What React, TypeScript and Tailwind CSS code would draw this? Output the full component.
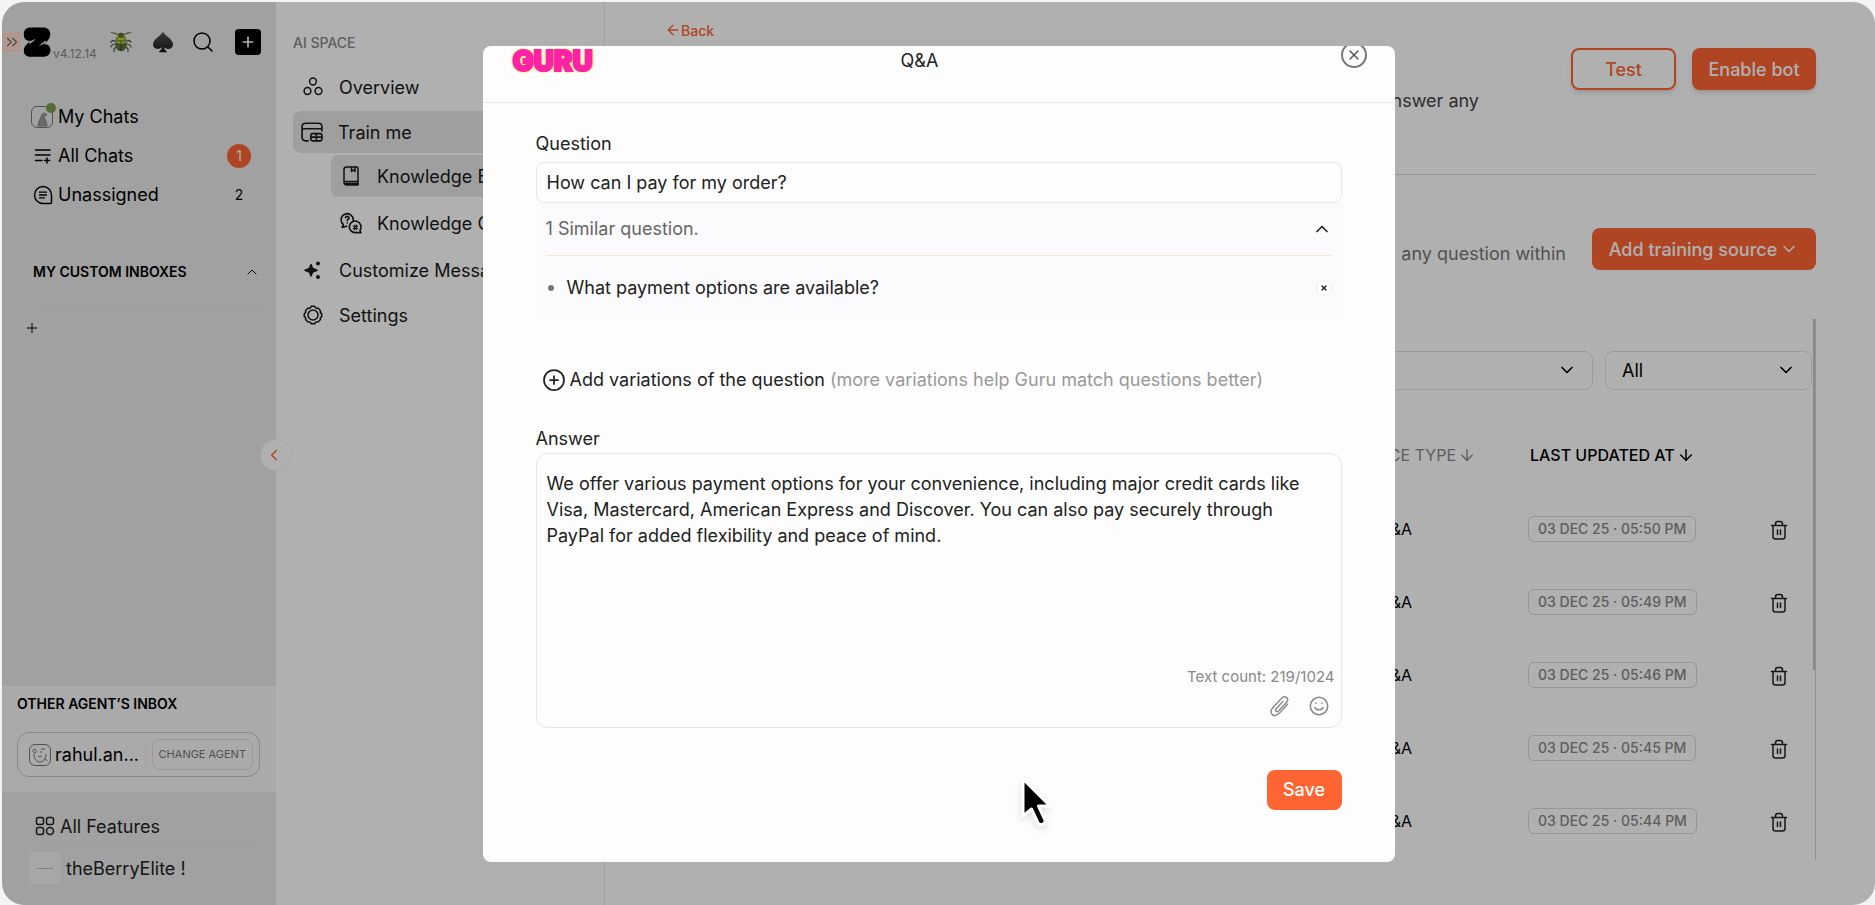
import { useState, type ReactNode } from 'react'
import {
  ArrowDown, ArrowLeft, ChevronDown, ChevronLeft, ChevronsRight, ChevronUp, CirclePlus, Plus, Search, X,
} from 'lucide-react'

interface TrainingRow {
  id: number
  type: string
  updatedAt: string
}

const ROWS: TrainingRow[] = [
  { id: 1, type: 'Q&A', updatedAt: '03 DEC 25 · 05:50 PM' },
  { id: 2, type: 'Q&A', updatedAt: '03 DEC 25 · 05:49 PM' },
  { id: 3, type: 'Q&A', updatedAt: '03 DEC 25 · 05:46 PM' },
  { id: 4, type: 'Q&A', updatedAt: '03 DEC 25 · 05:45 PM' },
  { id: 5, type: 'Q&A', updatedAt: '03 DEC 25 · 05:44 PM' },
]

const DEFAULT_ANSWER =
  'We offer various payment options for your convenience, including major credit cards like Visa, Mastercard, American Express and Discover. You can also pay securely through PayPal for added flexibility and peace of mind.'

const MAX_ANSWER = 1024

function Icon({ children, size = 20 }: { children: ReactNode; size?: number }) {
  return (
    <svg
      width={size}
      height={size}
      viewBox="0 0 20 20"
      fill="none"
      stroke="currentColor"
      strokeWidth="1.5"
      strokeLinecap="round"
      strokeLinejoin="round"
      className="shrink-0"
      aria-hidden="true"
    >
      {children}
    </svg>
  )
}

function LogoMark() {
  return (
    <svg width="28" height="30" viewBox="0 0 28 30" aria-hidden="true" className="shrink-0">
      <path
        d="M7.500 0.500h12.500c4.500 0 7.200 2.600 7.200 6.600 0 3.200-1.200 5-3 7-1.200 1.300-2 2.300-2.700 3.600 3.200-.9 5.900 1.100 5.900 5.300 0 4.500-2.700 6.700-7 6.700H7.500C3 29.700.8 27.200.8 23.700c0-2.800 1.100-4.600 3-6.500l3.400-3.500C3.700 14.200.8 12.200.8 7.300.8 3.200 3.300.5 7.500.5z"
        fill="#000"
      />
      <path d="M6.500 14.200c2.500-.3 3.800-1.500 6.300-2.200-1.700 1.800-4 3.500-6.800 5.300zM22.500 16.500c-2.700.2-3.900 1.500-6.500 2.300 1.800-2 4.200-3.500 7-5.600z" fill="#e9e9e9" />
    </svg>
  )
}

function Beetle() {
  return (
    <svg width="22" height="22" viewBox="0 0 22 22" aria-hidden="true">
      <g fill="none" stroke="#5b6152" strokeWidth="1.300" strokeLinecap="round" strokeLinejoin="round">
        <path d="M8 4C6.500 1.500 4 2.500 1.500 1.500M14 4c1.500-2.500 4-1.500 6.500-2.500" stroke="#6d7a3a" />
        <path d="M5 10L2.500 9.500 1 11M5 13l-3 1-1 2M6 16l-2 2v2.500M17 10l2.500-.5L21 11M17 13l3 1 1 2M16 16l2 2v2.500" />
      </g>
      <ellipse cx="11" cy="13.500" rx="5.800" ry="6.800" fill="#5a7440" />
      <path d="M5.500 9.500C5.500 6 8 4.500 11 4.500s5.500 1.500 5.500 5c-2 1.500-9 1.500-11 0z" fill="#7d9a3e" />
      <ellipse cx="11" cy="4" rx="2.800" ry="2.300" fill="#59702c" />
      <path d="M11 11v9" stroke="#2f4514" strokeWidth="1" />
      <path d="M7 11.500c1-.8 2.500-.5 3 .8M15 11.500c-1-.8-2.500-.5-3 .8M8 8h6" stroke="#e7d73c" strokeWidth="1.500" fill="none" strokeLinecap="round" />
    </svg>
  )
}

function Spade() {
  return (
    <svg width="22" height="22" viewBox="0 0 22 22" aria-hidden="true">
      <defs>
        <linearGradient id="spade" x1="0" y1="0" x2="0" y2="1">
          <stop offset="0" stopColor="#55585c" />
          <stop offset="1" stopColor="#15171a" />
        </linearGradient>
      </defs>
      <path
        d="M11 .8c1.500 3.500 10 7.500 10 12.500 0 3-2.200 4.700-4.700 4.700-1.900 0-3.300-.8-4.100-1.900.2 2 1 3.400 2.600 4.300.4.300.2.900-.3.900h-7c-.5 0-.7-.6-.3-.9 1.600-.9 2.400-2.300 2.600-4.300-.8 1.100-2.200 1.900-4.100 1.900C3.200 18 1 16.300 1 13.300 1 8.300 9.500 4.300 11 .8z"
        fill="url(#spade)"
      />
    </svg>
  )
}

function OverviewIcon() {
  return (
    <Icon>
      <circle cx="10" cy="4.500" r="3.400" />
      <circle cx="4.500" cy="14" r="3.400" />
      <circle cx="15.500" cy="14" r="3.400" />
    </Icon>
  )
}

function TrainIcon() {
  return (
    <Icon size={22}>
      <path d="M6.500 18H4.500C2.500 18 1 16.800 1 14.800V5c0-2 1.500-3 3.500-3h11c2 0 3.500 1 3.500 3v4M1 7h18" />
      <rect x="9" y="11.500" width="10" height="6.500" rx="1.500" />
      <path d="M14 11.500V18M9 14.700h10" />
    </Icon>
  )
}

function BookIcon() {
  return (
    <Icon>
      <path d="M3 16V3.500C3 2 4 1 5.500 1h10c1 0 1.500.6 1.500 1.500V19H6c-1.700 0-3-1.200-3-3zM3.200 15.500H17M3.500 17.500H17" />
      <path d="M10.500 1v4.500L12.200 4l1.800 1.500V1" />
    </Icon>
  )
}

function GapsIcon() {
  return (
    <Icon size={22}>
      <path d="M12 7.500A5.500 5.500 0 1 0 3 11.300L2 14l4-1.100" />
      <path d="M5 5.200c.3-1.700 3.200-1.500 3.200.2 0 1.200-1.600 1.200-1.600 2.400M6.600 9.800v.1" />
      <path d="M18.200 16.500A5.300 5.300 0 1 0 14 18.800h5z" />
      <path d="M12 13h4M12 15h4M13.600 11.800l-.6 4.200M15.200 11.800l-.6 4.200" strokeWidth="1" />
    </Icon>
  )
}

function SparkIcon() {
  return (
    <Icon>
      <path d="M8 4.500l1.600 4L14 10.200 9.600 12 8 16l-1.600-4L2 10.200l4.400-1.700z" fill="currentColor" />
      <circle cx="15" cy="3.500" r="1.200" fill="currentColor" />
      <circle cx="15" cy="17" r="1.200" fill="currentColor" />
    </Icon>
  )
}

function GearIcon() {
  return (
    <Icon>
      <path d="M8.200 1.300h3.600c.4 1.700 1.500 2.300 3.200 1.800l2.500 2.600c-.6 1.500-.1 2.400 1.300 3.200v2.400c-1.400.8-1.900 1.700-1.300 3.200L15 17.100c-1.700-.5-2.800.1-3.200 1.700H8.200c-.4-1.600-1.500-2.200-3.200-1.700l-2.500-2.600c.6-1.500.1-2.400-1.300-3.200V8.900c1.400-.8 1.900-1.700 1.300-3.200L5 3.100c1.700.5 2.800-.1 3.200-1.800z" />
      <circle cx="10" cy="10" r="5" />
    </Icon>
  )
}

function AllChatsIcon() {
  return (
    <Icon>
      <path d="M2.500 4h14.500M2.500 9h14.500M2.500 14.500h6.500" />
      <path d="M14 12v5M11.500 14.500h5" />
    </Icon>
  )
}

function UnassignedIcon() {
  return (
    <Icon>
      <path d="M18.500 10A8.500 8.500 0 1 0 10 18.500h7.500c.6 0 1-.4 1-1z" />
      <path d="M6.500 7.200h7M6.500 10h7M6.500 12.800h5" strokeWidth="1.300" />
    </Icon>
  )
}

function FeaturesIcon() {
  return (
    <Icon>
      <rect x="1.500" y="1.500" width="7" height="7" rx="2" />
      <rect x="11.500" y="1.500" width="7" height="7" rx="2" />
      <rect x="1.500" y="11.500" width="7" height="7" rx="2" />
      <circle cx="15" cy="15" r="3.500" />
    </Icon>
  )
}

function TrashIcon() {
  return (
    <Icon>
      <path d="M2.500 5.500h15M4 5.500v11C4 18 5 19 6.500 19h7c1.500 0 2.500-1 2.500-2.500v-11M6.500 5.500V4c0-1.500.8-2.500 2.300-2.500h2.400c1.500 0 2.300 1 2.300 2.500v1.500M8.500 10v4.500M11.500 10v4.500" />
    </Icon>
  )
}

function ClipIcon() {
  return (
    <Icon size={22}>
      <path d="M17 8.200l-6.800 7.600c-3 3.300-5.800 3.300-7.400 1.800-1.600-1.600-1.200-4 1-6.400l7.500-8.100c1.600-1.700 3.600-1.800 4.800-.7 1.300 1.200 1.100 3-.3 4.500l-6.900 7.500c-.8.900-1.900 1-2.500.4-.7-.7-.5-1.600.3-2.500l6-6.500" strokeWidth="1.300" />
    </Icon>
  )
}

function SmileIcon() {
  return (
    <Icon>
      <circle cx="10" cy="10" r="8.700" />
      <path d="M6 11.500c.8 3 7.200 3 8 0M7 7v.5M13 7v.5" />
    </Icon>
  )
}

function MouseCursor() {
  return (
    <svg
      width="36"
      height="54"
      viewBox="0 0 36 54"
      aria-hidden="true"
      className="pointer-events-none absolute bottom-8 left-1/2 ml-20 drop-shadow-md"
    >
      <path
        d="M4 3v37l8.500-7 6.500 14c1.800 3.500 8.500.5 7-3L19.500 30H31z"
        fill="#000"
        stroke="#fff"
        strokeWidth="3"
        strokeLinejoin="round"
      />
    </svg>
  )
}

function Avatar({ online = false }: { online?: boolean }) {
  return (
    <span className="relative size-[22px] shrink-0 rounded-md border border-[#777777]">
      <svg width="20" height="20" viewBox="0 0 20 20" fill="none" stroke="#777" aria-hidden="true">
        {online ? (
          <path d="M6 19c0-5 2-6 3-9 1-4 4-5 6-2l-3 1c0 3 3 4 3 10z" fill="#9a9a9a" stroke="#888" />
        ) : (
          <path d="M3 5c2-2 4 0 3 2s-3 1-3-2zM11 4h4M10 7h2M4 9c0 5 3 8 6 8s6-3 6-8M8 11c1 1 3 1 4 0M15 13l2 3" />
        )}
      </svg>
      {online && <span className="absolute -right-1 -top-1 size-[10px] rounded-full bg-[#7d9c55]" />}
    </span>
  )
}

function InboxSidebar() {
  return (
    <aside className="relative flex w-[274px] shrink-0 flex-col bg-[#e9e9e9]">
      <div className="flex h-20 items-center">
        <button aria-label="Expand" className="flex h-5 w-[19px] items-center justify-center bg-[#ffdccf] text-[#666666]">
          <ChevronsRight size={18} strokeWidth={1.5} />
        </button>
        <a href="#home" aria-label="Home" className="ml-0.5">
          <LogoMark />
        </a>
        <span className="mt-6 w-[59px] pl-0.5 text-[12px] leading-4 text-[#888888]">v4.12.14</span>
        <button aria-label="Report a bug"><Beetle /></button>
        <button aria-label="Games" className="ml-5"><Spade /></button>
        <button aria-label="Search" className="ml-[17px]"><Search size={24} strokeWidth={1.5} /></button>
        <button aria-label="New chat" className="ml-5 flex size-[26px] items-center justify-center rounded bg-black text-white">
          <Plus size={16} strokeWidth={2.5} />
        </button>
      </div>

      <nav className="mt-[15px] flex flex-col text-[18px]">
        <a href="#my-chats" className="flex h-[39px] items-center gap-[5px] pl-[29px]">
          <Avatar online />
          My Chats
        </a>
        <a href="#all-chats" className="flex h-[39px] items-center gap-[5px] pl-[31px] pr-[25px]">
          <AllChatsIcon />
          All Chats
          <span className="ml-auto flex size-6 items-center justify-center rounded-full bg-[#ff6433] text-[14px] text-white">1</span>
        </a>
        <a href="#unassigned" className="flex h-[39px] items-center gap-[5px] pl-[31px] pr-[25px]">
          <UnassignedIcon />
          Unassigned
          <span className="ml-auto w-6 text-center text-[14px]">2</span>
        </a>
      </nav>

      <div className="mt-[38px] flex h-[39px] items-center justify-between pl-[31px] pr-4 text-[14px] font-semibold">
        MY CUSTOM INBOXES
        <ChevronUp size={16} strokeWidth={1.5} />
      </div>
      <div className="ml-[35px] mr-3 mt-[14px] border-t border-[#e2e2e2]" />
      <button aria-label="Add inbox" className="ml-[22px] mt-3.5 w-4">
        <Plus size={16} strokeWidth={1.5} />
      </button>

      <div className="mt-auto bg-[#f6f6f6] pb-[15px] pl-[15px] pr-4 pt-1.5">
        <h2 className="text-[14px] font-semibold leading-6">OTHER AGENT’S INBOX</h2>
        <div className="mt-4 flex h-[45px] items-center rounded-xl border border-[#c6c6c6] pl-[11px] pr-1.5">
          <Avatar />
          <span className="ml-1 text-[18px]">rahul.an...</span>
          <span className="ml-auto h-8 border-l border-[#e9e9e9]" />
          <button className="ml-1.5 h-[31px] whitespace-nowrap rounded-lg border border-[#dedede] px-1.5 text-[11px] text-[#777777]">
            CHANGE AGENT
          </button>
        </div>
      </div>
      <div className="flex flex-col pb-[21px] pt-4 text-[18px] text-[#222222]">
        <a href="#features" className="flex h-9 items-center gap-[5px] pl-[33px]">
          <FeaturesIcon />
          All Features
        </a>
        <div className="ml-[35px] mr-5 border-t border-[#e2e2e2]" />
        <a href="#account" className="mt-[7px] flex h-8 items-center gap-[5px] pl-[27px]">
          <span className="flex size-8 items-center justify-center rounded bg-[#f2f2f2]">
            <span className="w-4 border-t border-[#b9c4b6]" />
          </span>
          theBerryElite !
        </a>
      </div>

      <button
        aria-label="Collapse sidebar"
        className="absolute -right-4 top-[437px] flex size-8 items-center justify-center rounded-full border border-[#f6f6f6] bg-white pr-1 text-[#ff6433]"
      >
        <ChevronLeft size={18} strokeWidth={2} />
      </button>
    </aside>
  )
}

function SpaceNav() {
  return (
    <nav className="w-[329px] shrink-0 border-r border-[#e6e6e6] bg-white pl-[17px] pr-3 text-[18px] text-[#1a1a1a]">
      <h2 className="mb-[11px] pt-[29px] text-[14px] font-medium leading-6 text-[#888888]">AI SPACE</h2>
      <a href="#overview" className="flex h-[42px] items-center gap-4 pl-[10px]">
        <OverviewIcon />
        Overview
      </a>
      <a href="#train" className="mt-[3px] flex h-[42px] items-center gap-[15px] rounded-lg bg-[#e6e6e6] pl-2">
        <TrainIcon />
        Train me
      </a>
      <a href="#base" className="ml-[38px] mt-0.5 flex h-[42px] items-center gap-4 rounded-lg bg-[#e6e6e6] pl-[10px]">
        <BookIcon />
        Knowledge Base
      </a>
      <a href="#gaps" className="ml-[38px] mt-[5px] flex h-[42px] items-center gap-[15px] pl-[9px]">
        <GapsIcon />
        Knowledge Gaps
      </a>
      <a href="#messages" className="mt-[5px] flex h-[42px] items-center gap-4 pl-[10px]">
        <SparkIcon />
        Customize Messages
      </a>
      <a href="#settings" className="mt-[3px] flex h-[42px] items-center gap-4 pl-[10px]">
        <GearIcon />
        Settings
      </a>
    </nav>
  )
}

function Filter({ label, width, options }: { label: string; width: string; options: string[] }) {
  return (
    <div className={`relative ${width}`}>
      <select
        aria-label={label}
        className="h-[39px] w-full appearance-none rounded-lg border border-[#e3e3e3] bg-white px-4 text-[18px]"
      >
        {options.map(o => <option key={o}>{o}</option>)}
      </select>
      <ChevronDown size={20} strokeWidth={2} className="pointer-events-none absolute right-4 top-[9px]" />
    </div>
  )
}

function TrainingPage() {
  return (
    <main className="flex min-w-0 flex-1 flex-col bg-white pb-[45px] pl-[60px] pr-[59px]">
      <a href="#back" className="mt-4 flex h-6 items-center text-[14px] font-medium text-[#ff6433]">
        <ArrowLeft size={16} />
        Back
      </a>
      <div className="mt-1.5 flex gap-4">
        <p className="mt-[41px] flex-1 pr-[76px] text-right text-[18px] leading-6 text-[#444444]">to answer any</p>
        <button className="h-[42px] w-[105px] rounded-lg border-2 border-[#ff6433] text-[18px] font-medium text-[#ff6433] shadow-md">
          Test
        </button>
        <button className="h-[42px] w-[124px] rounded-lg bg-[#ff6433] text-[18px] font-medium text-white shadow-md">
          Enable bot
        </button>
      </div>
      <div className="mt-[61px] border-t border-[#d9d9d9]" />
      <div className="mt-[53px] flex items-start">
        <p className="mt-3.5 flex-1 pr-[26px] text-right text-[18px] leading-6 text-[#777777]">any question within</p>
        <button className="flex h-[42px] w-[224px] items-center justify-center gap-0.5 rounded-lg bg-[#ff6433] text-[18px] font-medium text-white">
          Add training source
          <ChevronDown size={20} strokeWidth={1.75} />
        </button>
      </div>

      <div className="relative mt-[49px] min-h-0 flex-1 overflow-hidden border-r border-[#d4d4d4] pr-[3px] pt-8">
        <span className="absolute right-0 top-0 h-[351px] w-0.5 bg-[#c6c6c6]" />
        <div className="flex justify-end gap-3">
          <Filter label="Source" width="w-[400px]" options={['']} />
          <Filter label="Status" width="w-[207px]" options={['All', 'Active']} />
        </div>
        <table className="mt-[37px] w-full table-fixed">
          <thead>
            <tr className="h-[65px] whitespace-nowrap text-[16px]">
              <th />
              <th className="w-[160px] pb-2.5 pr-[52px] font-normal text-[#888888]">
                <span className="flex items-center justify-end gap-0.5">
                  SOURCE TYPE <ArrowDown size={18} strokeWidth={1.75} className="shrink-0" />
                </span>
              </th>
              <th className="w-[217px] pb-2.5 pl-[2px] font-medium">
                <span className="flex items-center gap-0.5">LAST UPDATED AT <ArrowDown size={18} /></span>
              </th>
              <th className="w-[67px]" />
            </tr>
          </thead>
          <tbody>
            {ROWS.map(row => (
              <tr key={row.id} className="h-[73px]">
                <td />
                <td className="pr-[116px] text-right text-[16px]">{row.type}</td>
                <td>
                  <span className="inline-flex h-[26px] items-center whitespace-nowrap rounded-md border border-[#d9d9d9] px-[9px] text-[14px] font-medium text-[#888888]">
                    {row.updatedAt}
                  </span>
                </td>
                <td className="text-center">
                  <button aria-label="Delete" className="align-middle text-[#222222]"><TrashIcon /></button>
                </td>
              </tr>
            ))}
          </tbody>
        </table>
      </div>
    </main>
  )
}

function QuestionDialog() {
  const [question, setQuestion] = useState('How can I pay for my order?')
  const [answer, setAnswer] = useState(DEFAULT_ANSWER)
  const [similar, setSimilar] = useState(['What payment options are available?'])
  const [open, setOpen] = useState(true)

  return (
    <div
      role="dialog"
      aria-label="Q&A"
      className="relative w-[912px] max-w-full rounded-lg bg-[#fdfdfd] text-[18px] text-[#222222]"
    >
      <header className="flex h-[57px] items-start justify-between border-b border-[#e8e8e8] pl-[30px] pr-[28px]">
        <span className="-mt-0.5 w-[84px] text-[28px] font-black leading-[34px] text-[#ff21a8] [-webkit-text-stroke:2px_#ff21a8] [text-shadow:1px_1px_2px_#ffd54a,-1px_-1px_2px_#ffd54a,1px_-1px_2px_#ffd54a,-1px_1px_2px_#ffd54a]">
          GURU
        </span>
        <h1 className="flex-1 pr-[98px] pt-[3px] text-center text-[18px] leading-6">Q&A</h1>
        <div className="h-6 overflow-hidden">
          <button
            aria-label="Close"
            className="-mt-1 flex size-[26px] items-center justify-center rounded-full border-2 border-[#777777] text-[#555555]"
          >
            <X size={16} strokeWidth={2} />
          </button>
        </div>
      </header>

      <div className="px-[53px] pb-[52px] pt-[29px]">
        <label htmlFor="question" className="mb-1.5 block leading-6">Question</label>
        <input
          id="question"
          value={question}
          onChange={e => setQuestion(e.target.value)}
          className="block h-[41px] w-full rounded-lg border border-[#e6e6e6] px-2.5"
        />

        <div className="bg-[#fbfafc] px-2.5">
          <button
            onClick={() => setOpen(!open)}
            className="flex h-[53px] w-full items-center justify-between border-b border-[#f7e4de] text-[#666666]"
          >
            1 Similar question.
            <ChevronUp size={20} className="text-[#222222]" />
          </button>
          <ul className="h-16">
            {open && similar.map(q => (
              <li key={q} className="flex h-full items-center">
                <span className="ml-0.5 size-1.5 rounded-full bg-[#777777]" />
                <span className="ml-[13px]">{q}</span>
                <button
                  aria-label="Remove"
                  onClick={() => setSimilar(similar.filter(s => s !== q))}
                  className="ml-auto flex size-4 items-center justify-center rounded-full border border-[#eeeeee] bg-white"
                >
                  <X size={8} strokeWidth={4} />
                </button>
              </li>
            ))}
          </ul>
        </div>

        <button className="mt-12 flex h-6 items-center gap-1 whitespace-nowrap pl-[6px]">
          <CirclePlus size={24} strokeWidth={1.75} />
          <span>
            Add variations of the question{' '}
            <span className="text-[#999999]">(more variations help Guru match questions better)</span>
          </span>
        </button>

        <label htmlFor="answer" className="mb-0.5 mt-[35px] block leading-6">Answer</label>
        <div className="flex h-[275px] flex-col rounded-xl border border-[#e6e6e6]">
          <textarea
            id="answer"
            value={answer}
            maxLength={MAX_ANSWER}
            onChange={e => setAnswer(e.target.value)}
            className="w-full flex-1 resize-none px-2.5 pt-[17px] leading-[26px] outline-none"
          />
          <div className="flex flex-col items-end pb-2.5 pr-1.5 text-[#888888]">
            <span className="text-[15px] leading-5">Text count: {answer.length}/{MAX_ANSWER}</span>
            <div className="mt-2 flex items-center gap-[18px] pr-1.5">
              <button aria-label="Attach file"><ClipIcon /></button>
              <button aria-label="Insert emoji"><SmileIcon /></button>
            </div>
          </div>
        </div>

        <button className="ml-auto mt-[42px] block h-10 w-[75px] rounded-lg bg-[#ff6433] font-medium text-white">
          Save
        </button>
      </div>
      <MouseCursor />
    </div>
  )
}

export default function App() {
  return (
    <div className="h-screen bg-[#f4f4f4] pl-0.5 pt-0.5 font-['Inter',sans-serif] text-black">
      <div className="relative flex h-full overflow-hidden rounded-[22px] bg-white">
        <InboxSidebar />
        <SpaceNav />
        <TrainingPage />
        <div className="absolute inset-0 flex items-center justify-center bg-black/31">
          <QuestionDialog />
        </div>
      </div>
    </div>
  )
}
